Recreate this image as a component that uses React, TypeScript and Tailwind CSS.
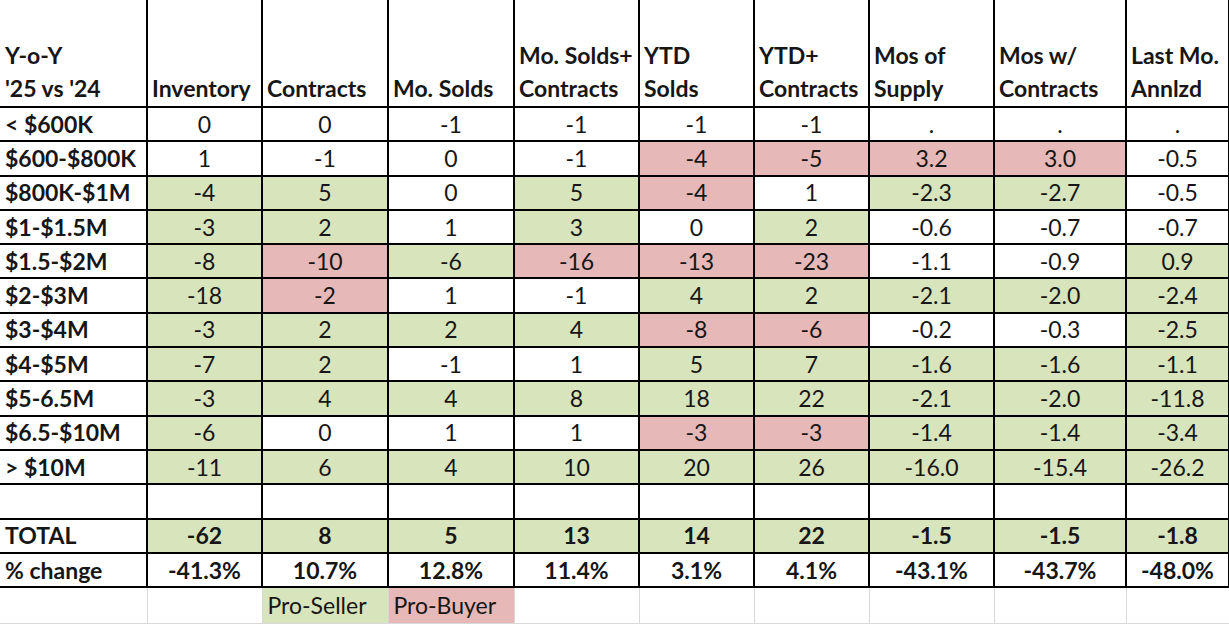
import React from "react";

const G = "bg-[#d8e4bc]";
const P = "bg-[#e6b8b7]";

const headers: [string, string][] = [
  ["", "Inventory"],
  ["", "Contracts"],
  ["", "Mo. Solds"],
  ["Mo. Solds+", "Contracts"],
  ["YTD", "Solds"],
  ["YTD+", "Contracts"],
  ["Mos of", "Supply"],
  ["Mos w/", "Contracts"],
  ["Last Mo.", "Annlzd"],
];

const widths = [147, 115, 126, 126, 125, 115, 115, 125, 132, 103];

const rows: { label: string; vals: string[]; cols: string }[] = [
  { label: "< $600K", vals: ["0", "0", "-1", "-1", "-1", "-1", ".", ".", "."], cols: "wwwwwwwww" },
  { label: "$600-$800K", vals: ["1", "-1", "0", "-1", "-4", "-5", "3.2", "3.0", "-0.5"], cols: "wwwwppppw" },
  { label: "$800K-$1M", vals: ["-4", "5", "0", "5", "-4", "1", "-2.3", "-2.7", "-0.5"], cols: "ggwgpwggw" },
  { label: "$1-$1.5M", vals: ["-3", "2", "1", "3", "0", "2", "-0.6", "-0.7", "-0.7"], cols: "ggwgwgwww" },
  { label: "$1.5-$2M", vals: ["-8", "-10", "-6", "-16", "-13", "-23", "-1.1", "-0.9", "0.9"], cols: "gpgpppwwg" },
  { label: "$2-$3M", vals: ["-18", "-2", "1", "-1", "4", "2", "-2.1", "-2.0", "-2.4"], cols: "gpwwggggg" },
  { label: "$3-$4M", vals: ["-3", "2", "2", "4", "-8", "-6", "-0.2", "-0.3", "-2.5"], cols: "ggggppwwg" },
  { label: "$4-$5M", vals: ["-7", "2", "-1", "1", "5", "7", "-1.6", "-1.6", "-1.1"], cols: "ggwwggggg" },
  { label: "$5-6.5M", vals: ["-3", "4", "4", "8", "18", "22", "-2.1", "-2.0", "-11.8"], cols: "ggggggggg" },
  { label: "$6.5-$10M", vals: ["-6", "0", "1", "1", "-3", "-3", "-1.4", "-1.4", "-3.4"], cols: "gwwwppggg" },
  { label: "> $10M", vals: ["-11", "6", "4", "10", "20", "26", "-16.0", "-15.4", "-26.2"], cols: "ggggggggg" },
  { label: "", vals: ["", "", "", "", "", "", "", "", ""], cols: "wwwwwwwww" },
  { label: "TOTAL", vals: ["-62", "8", "5", "13", "14", "22", "-1.5", "-1.5", "-1.8"], cols: "ggggggggg" },
  { label: "% change", vals: ["-41.3%", "10.7%", "12.8%", "11.4%", "3.1%", "4.1%", "-43.1%", "-43.7%", "-48.0%"], cols: "wwwwwwwww" },
];

function bg(c: string) {
  if (c === "g") return G;
  if (c === "p") return P;
  return "bg-white";
}

export default function App() {
  return (
    <div
      className="w-[1229px] h-[624px] overflow-hidden bg-white text-[#161616]"
      style={{ fontFamily: "Lato, 'Liberation Sans', sans-serif" }}
    >
      <table className="border-collapse table-fixed w-[1229px] text-[23px] leading-none">
        <colgroup>
          {widths.map((w, i) => (
            <col key={i} style={{ width: w }} />
          ))}
        </colgroup>
        <tbody>
          <tr className="h-[107px]">
            <td className="border-2 border-black border-l-0 border-t-0 align-bottom px-[5px] pb-[3px] font-bold whitespace-nowrap">
              <div className="leading-[35px]">Y-o-Y</div>
              <div className="leading-[30px]">'25 vs '24</div>
            </td>
            {headers.map(([a, b], i) => (
              <td
                key={i}
                className="border-2 border-black border-t-0 align-bottom px-[4px] pb-[3px] font-bold whitespace-nowrap"
              >
                {a && <div className="leading-[35px]">{a}</div>}
                <div className="leading-[30px]">{b}</div>
              </td>
            ))}
          </tr>
          {rows.map((r, ri) => {
            const bold = r.label === "TOTAL" || r.label === "% change";
            return (
              <tr key={ri} className="h-[34.3px]">
                <td className="border-2 border-black border-l-0 px-[5px] font-bold whitespace-nowrap">
                  {r.label}
                </td>
                {r.vals.map((v, i) => (
                  <td
                    key={i}
                    className={`border-2 border-black text-center ${bg(r.cols[i])} ${bold ? "font-bold" : ""}`}
                  >
                    {v}
                  </td>
                ))}
              </tr>
            );
          })}
          <tr className="h-[36px]">
            <td className="border border-[#d9d9d9] border-l-0 border-t-0"></td>
            <td className="border border-[#d9d9d9] border-t-0"></td>
            <td className={`border border-[#d9d9d9] border-t-0 ${G} px-[5px] whitespace-nowrap`}>Pro-Seller</td>
            <td className={`border border-[#d9d9d9] border-t-0 ${P} px-[5px] whitespace-nowrap`}>Pro-Buyer</td>
            <td className="border border-[#d9d9d9] border-t-0"></td>
            <td className="border border-[#d9d9d9] border-t-0"></td>
            <td className="border border-[#d9d9d9] border-t-0"></td>
            <td className="border border-[#d9d9d9] border-t-0"></td>
            <td className="border border-[#d9d9d9] border-t-0"></td>
            <td className="border border-[#d9d9d9] border-t-0"></td>
          </tr>
        </tbody>
      </table>
    </div>
  );
}
